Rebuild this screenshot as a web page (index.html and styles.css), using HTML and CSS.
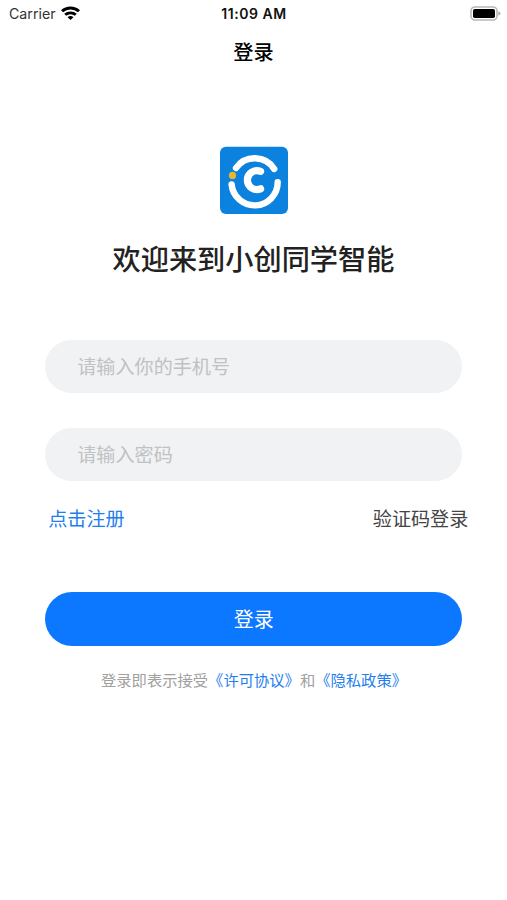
FILE: index.html
```html
<!DOCTYPE html>
<html lang="zh-CN">
<head>
<meta charset="utf-8">
<title>登录</title>
<link rel="stylesheet" href="styles.css">
</head>
<body>
<header class="status">
  <div class="carrier">
    <span>Carrier</span>
    <svg class="wifi" width="19" height="14" viewBox="0 0 18 14" preserveAspectRatio="none">
      <g fill="none" stroke="#000" stroke-width="2.8">
        <path d="M1 5.3a11.4 11.4 0 0 1 16 0"/>
        <path d="M4 8.8a7.2 7.2 0 0 1 10 0"/>
      </g>
      <path d="M9 14L6.2 11.3a4 4 0 0 1 5.6 0z"/>
    </svg>
  </div>
  <time class="time">11:09 AM</time>
  <svg class="battery" width="31" height="16" viewBox="0 0 31 16">
    <rect x="1" y="1" width="26" height="13" rx="4" fill="#fff" stroke="#b8b8b8" stroke-width="1.6"/>
    <rect x="3" y="3" width="22" height="9" rx="1.8"/>
    <path d="M28.3 5.3q2.2.6 2.2 2.2t-2.2 2.2z" fill="#b0b0b0"/>
  </svg>
</header>
<h1 class="nav-title">登录</h1>
<main class="content">
  <svg class="logo" width="68" height="68" viewBox="0 0 68 68">
    <rect y="-.3" width="68" height="67.3" rx="6" fill="#0c82df"/>
    <g fill="none" stroke="#fff" stroke-linecap="round">
      <path stroke-width="6.4" d="M16 21a23 23 0 0 1 38.2 1"/>
      <path stroke-width="6.4" d="M11.6 37.4a23.1 23.1 0 0 0 46.1-2.2"/>
      <path stroke-width="7.2" d="M40.6 24.4a9.6 9.4 0 1 0 0 17.4"/>
    </g>
    <circle cx="12.5" cy="28.4" r="3.6" fill="#e9b72d"/>
  </svg>
  <h2 class="welcome">欢迎来到小创同学智能</h2>
  <form class="form">
    <input class="field" type="tel" placeholder="请输入你的手机号">
    <input class="field" type="password" placeholder="请输入密码">
    <div class="links">
      <a class="register">点击注册</a>
      <a class="code-login">验证码登录</a>
    </div>
    <button class="submit" type="button">登录</button>
  </form>
  <p class="agreement">登录即表示接受<a>《许可协议》</a>和<a>《隐私政策》</a></p>
</main>
</body>
</html>
```

FILE: styles.css
```css
* {
  box-sizing: border-box;
}

body {
  margin: 0;
  height: 900px;
  background: #fff;
  color: #222;
  font-family: "Noto Sans CJK SC", sans-serif;
  overflow: hidden;
}

.status {
  display: grid;
  grid-template-columns: 1fr auto 1fr;
  align-items: center;
  height: 28px;
  padding: 0 6px 0 9px;
  font: 14.2px/28px Inter, sans-serif;
  color: #111;
}

.carrier {
  display: flex;
  align-items: center;
  gap: 5px;
  color: #333;
}

.wifi {
  margin-top: -2px;
}

.time {
  font-size: 14px;
  font-weight: 600;
  letter-spacing: 0.55px;
  margin-left: -2px;
}

.battery {
  justify-self: end;
  margin-top: -1px;
}

.nav-title {
  margin: 9px 0 0;
  font-size: 20.2px;
  line-height: 30px;
  font-weight: 500;
  text-align: center;
  color: #000;
}

.content {
  display: flex;
  flex-direction: column;
  align-items: center;
  padding: 80px 45px 0;
}

.logo {
  display: block;
  overflow: visible;
}

.welcome {
  margin: 23px 0 0;
  font-size: 28.2px;
  line-height: 40px;
  font-weight: 500;
  white-space: nowrap;
}

.form {
  display: flex;
  flex-direction: column;
  width: 417px;
  margin: 62px 0 0 0.5px;
}

.field {
  width: 100%;
  height: 53px;
  padding: 0 32px 2px;
  border: 0;
  border-radius: 27px;
  outline: 0;
  background: #f0f2f4;
  font: 19.1px "Noto Sans CJK SC", sans-serif;
}

.field + .field {
  margin-top: 35px;
}

.field::placeholder {
  color: #c0c1c3;
}

.links {
  display: flex;
  justify-content: space-between;
  margin: 22px -6px 0 3px;
  font-size: 19.1px;
  line-height: 30px;
}

.register {
  color: #1f80ed;
}

.code-login {
  color: #444;
}

.submit {
  height: 54px;
  margin-top: 59px;
  padding: 0 0 2px;
  border: 0;
  border-radius: 27px;
  background: #0b78ff;
  color: #fff;
  font: 20px "Noto Sans CJK SC", sans-serif;
}

.agreement {
  margin: 21px 0 0 1px;
  font-size: 15.3px;
  line-height: 24px;
  color: #a0a0a0;
  white-space: nowrap;
}

.agreement a {
  color: #1f80ed;
}
```
